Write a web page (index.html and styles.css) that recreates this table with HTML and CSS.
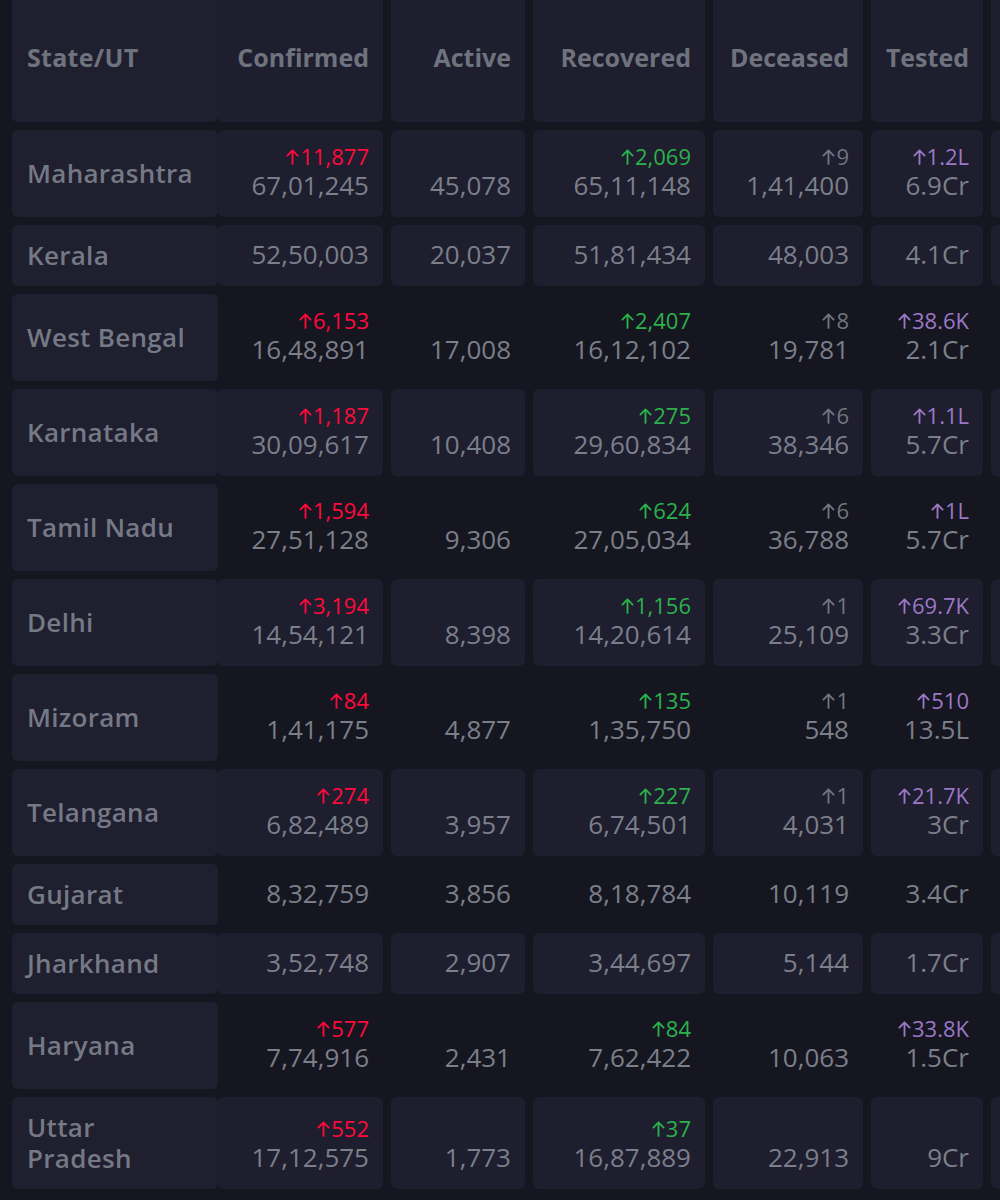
FILE: index.html
```html
<!DOCTYPE html>
<html lang="en">
<head>
<meta charset="utf-8">
<title>State-wise table</title>
<link rel="stylesheet" href="styles.css">
</head>
<body>
<svg width="0" height="0" class="defs" aria-hidden="true">
  <symbol id="up" viewBox="0 0 14 18"><path d="M7 17V2.5M1.5 8L7 2.5 12.5 8" fill="none" stroke="currentColor" stroke-width="2" stroke-linecap="round" stroke-linejoin="round"/></symbol>
</svg>
<div class="table">
  <div class="row head boxed">
    <div class="lead"><div class="cell state">State/UT</div><div class="cell num conf">Confirmed</div></div>
    <div class="cell num act">Active</div>
    <div class="cell num rec">Recovered</div>
    <div class="cell num dec">Deceased</div>
    <div class="cell num tst">Tested</div>
    <div class="cell more"></div>
  </div>

  <div class="row boxed">
    <div class="lead"><div class="cell state">Maharashtra</div><div class="cell num conf"><span class="delta red"><svg class="arw"><use href="#up"/></svg>11,877</span><span class="total">67,01,245</span></div></div>
    <div class="cell num act"><span class="total">45,078</span></div>
    <div class="cell num rec"><span class="delta green"><svg class="arw"><use href="#up"/></svg>2,069</span><span class="total">65,11,148</span></div>
    <div class="cell num dec"><span class="delta gray"><svg class="arw"><use href="#up"/></svg>9</span><span class="total">1,41,400</span></div>
    <div class="cell num tst"><span class="delta purple"><svg class="arw"><use href="#up"/></svg>1.2L</span><span class="total">6.9Cr</span></div>
    <div class="cell more"></div>
  </div>

  <div class="row boxed">
    <div class="lead"><div class="cell state">Kerala</div><div class="cell num conf"><span class="total">52,50,003</span></div></div>
    <div class="cell num act"><span class="total">20,037</span></div>
    <div class="cell num rec"><span class="total">51,81,434</span></div>
    <div class="cell num dec"><span class="total">48,003</span></div>
    <div class="cell num tst"><span class="total">4.1Cr</span></div>
    <div class="cell more"></div>
  </div>

  <div class="row">
    <div class="lead"><div class="cell state">West Bengal</div><div class="cell num conf"><span class="delta red"><svg class="arw"><use href="#up"/></svg>6,153</span><span class="total">16,48,891</span></div></div>
    <div class="cell num act"><span class="total">17,008</span></div>
    <div class="cell num rec"><span class="delta green"><svg class="arw"><use href="#up"/></svg>2,407</span><span class="total">16,12,102</span></div>
    <div class="cell num dec"><span class="delta gray"><svg class="arw"><use href="#up"/></svg>8</span><span class="total">19,781</span></div>
    <div class="cell num tst"><span class="delta purple"><svg class="arw"><use href="#up"/></svg>38.6K</span><span class="total">2.1Cr</span></div>
    <div class="cell more"></div>
  </div>

  <div class="row boxed">
    <div class="lead"><div class="cell state">Karnataka</div><div class="cell num conf"><span class="delta red"><svg class="arw"><use href="#up"/></svg>1,187</span><span class="total">30,09,617</span></div></div>
    <div class="cell num act"><span class="total">10,408</span></div>
    <div class="cell num rec"><span class="delta green"><svg class="arw"><use href="#up"/></svg>275</span><span class="total">29,60,834</span></div>
    <div class="cell num dec"><span class="delta gray"><svg class="arw"><use href="#up"/></svg>6</span><span class="total">38,346</span></div>
    <div class="cell num tst"><span class="delta purple"><svg class="arw"><use href="#up"/></svg>1.1L</span><span class="total">5.7Cr</span></div>
    <div class="cell more"></div>
  </div>

  <div class="row">
    <div class="lead"><div class="cell state">Tamil Nadu</div><div class="cell num conf"><span class="delta red"><svg class="arw"><use href="#up"/></svg>1,594</span><span class="total">27,51,128</span></div></div>
    <div class="cell num act"><span class="total">9,306</span></div>
    <div class="cell num rec"><span class="delta green"><svg class="arw"><use href="#up"/></svg>624</span><span class="total">27,05,034</span></div>
    <div class="cell num dec"><span class="delta gray"><svg class="arw"><use href="#up"/></svg>6</span><span class="total">36,788</span></div>
    <div class="cell num tst"><span class="delta purple"><svg class="arw"><use href="#up"/></svg>1L</span><span class="total">5.7Cr</span></div>
    <div class="cell more"></div>
  </div>

  <div class="row boxed">
    <div class="lead"><div class="cell state">Delhi</div><div class="cell num conf"><span class="delta red"><svg class="arw"><use href="#up"/></svg>3,194</span><span class="total">14,54,121</span></div></div>
    <div class="cell num act"><span class="total">8,398</span></div>
    <div class="cell num rec"><span class="delta green"><svg class="arw"><use href="#up"/></svg>1,156</span><span class="total">14,20,614</span></div>
    <div class="cell num dec"><span class="delta gray"><svg class="arw"><use href="#up"/></svg>1</span><span class="total">25,109</span></div>
    <div class="cell num tst"><span class="delta purple"><svg class="arw"><use href="#up"/></svg>69.7K</span><span class="total">3.3Cr</span></div>
    <div class="cell more"></div>
  </div>

  <div class="row">
    <div class="lead"><div class="cell state">Mizoram</div><div class="cell num conf"><span class="delta red"><svg class="arw"><use href="#up"/></svg>84</span><span class="total">1,41,175</span></div></div>
    <div class="cell num act"><span class="total">4,877</span></div>
    <div class="cell num rec"><span class="delta green"><svg class="arw"><use href="#up"/></svg>135</span><span class="total">1,35,750</span></div>
    <div class="cell num dec"><span class="delta gray"><svg class="arw"><use href="#up"/></svg>1</span><span class="total">548</span></div>
    <div class="cell num tst"><span class="delta purple"><svg class="arw"><use href="#up"/></svg>510</span><span class="total">13.5L</span></div>
    <div class="cell more"></div>
  </div>

  <div class="row boxed">
    <div class="lead"><div class="cell state">Telangana</div><div class="cell num conf"><span class="delta red"><svg class="arw"><use href="#up"/></svg>274</span><span class="total">6,82,489</span></div></div>
    <div class="cell num act"><span class="total">3,957</span></div>
    <div class="cell num rec"><span class="delta green"><svg class="arw"><use href="#up"/></svg>227</span><span class="total">6,74,501</span></div>
    <div class="cell num dec"><span class="delta gray"><svg class="arw"><use href="#up"/></svg>1</span><span class="total">4,031</span></div>
    <div class="cell num tst"><span class="delta purple"><svg class="arw"><use href="#up"/></svg>21.7K</span><span class="total">3Cr</span></div>
    <div class="cell more"></div>
  </div>

  <div class="row">
    <div class="lead"><div class="cell state">Gujarat</div><div class="cell num conf"><span class="total">8,32,759</span></div></div>
    <div class="cell num act"><span class="total">3,856</span></div>
    <div class="cell num rec"><span class="total">8,18,784</span></div>
    <div class="cell num dec"><span class="total">10,119</span></div>
    <div class="cell num tst"><span class="total">3.4Cr</span></div>
    <div class="cell more"></div>
  </div>

  <div class="row boxed">
    <div class="lead"><div class="cell state">Jharkhand</div><div class="cell num conf"><span class="total">3,52,748</span></div></div>
    <div class="cell num act"><span class="total">2,907</span></div>
    <div class="cell num rec"><span class="total">3,44,697</span></div>
    <div class="cell num dec"><span class="total">5,144</span></div>
    <div class="cell num tst"><span class="total">1.7Cr</span></div>
    <div class="cell more"></div>
  </div>

  <div class="row">
    <div class="lead"><div class="cell state">Haryana</div><div class="cell num conf"><span class="delta red"><svg class="arw"><use href="#up"/></svg>577</span><span class="total">7,74,916</span></div></div>
    <div class="cell num act"><span class="total">2,431</span></div>
    <div class="cell num rec"><span class="delta green"><svg class="arw"><use href="#up"/></svg>84</span><span class="total">7,62,422</span></div>
    <div class="cell num dec"><span class="total">10,063</span></div>
    <div class="cell num tst"><span class="delta purple"><svg class="arw"><use href="#up"/></svg>33.8K</span><span class="total">1.5Cr</span></div>
    <div class="cell more"></div>
  </div>

  <div class="row boxed">
    <div class="lead"><div class="cell state">Uttar Pradesh</div><div class="cell num conf"><span class="delta red"><svg class="arw"><use href="#up"/></svg>552</span><span class="total">17,12,575</span></div></div>
    <div class="cell num act"><span class="total">1,773</span></div>
    <div class="cell num rec"><span class="delta green"><svg class="arw"><use href="#up"/></svg>37</span><span class="total">16,87,889</span></div>
    <div class="cell num dec"><span class="total">22,913</span></div>
    <div class="cell num tst"><span class="total">9Cr</span></div>
    <div class="cell more"></div>
  </div>
</div>
</body>
</html>
```

FILE: styles.css
```css
html, body {
  margin: 0;
  padding: 0;
  background: #161621;
  overflow: hidden;
}

body {
  font-family: "Open Sans", "Noto Sans", sans-serif;
  color: #787c87;
  width: 1000px;
  height: 1200px;
}

.defs {
  position: absolute;
}

.table {
  display: flex;
  flex-direction: column;
  gap: 8px;
  padding-left: 12px;
  width: 1000px;
  box-sizing: border-box;
  overflow: hidden;
}

.row {
  display: flex;
  gap: 8px;
}

.lead {
  display: flex;
  flex: none;
}

.cell {
  box-sizing: border-box;
  padding: 13px 14px 15px 15px;
  border-radius: 6px;
  flex: none;
}

.state {
  width: 206px;
  padding: 15px;
  background: #1f1f30;
  font-weight: 600;
  font-size: 26px;
  line-height: 31px;
  letter-spacing: 0.3px;
  display: flex;
  align-items: center;
  color: #757984;
}

.row.boxed .cell {
  background: #1e1e2e;
}

.row.boxed .state {
  background: #1f1f30;
}

.num {
  display: flex;
  flex-direction: column;
  align-items: flex-end;
  justify-content: flex-end;
  text-align: right;
}

.conf { width: 165px; }
.act  { width: 134px; }
.rec  { width: 172px; }
.dec  { width: 150px; }
.tst  { width: 112px; }
.more { width: 120px; }

.head .cell {
  height: 122px;
  border-radius: 0 0 6px 6px;
  padding-top: 15px;
  padding-bottom: 24px;
  font-weight: 700;
  font-size: 25px;
  line-height: 30px;
  color: #6f737e;
}

.head .num {
  justify-content: center;
}

.total {
  font-size: 26px;
  line-height: 33px;
  font-weight: 400;
  color: #7b7f8a;
}

.delta {
  display: flex;
  align-items: center;
  font-size: 22px;
  line-height: 26px;
  font-weight: 400;
}

.arw {
  width: 13px;
  height: 17px;
  margin-right: 1px;
}

.red { color: #ff0a3c; }
.green { color: #2bb24c; }
.gray { color: #70757f; }
.purple { color: #9b78c6; }
```
